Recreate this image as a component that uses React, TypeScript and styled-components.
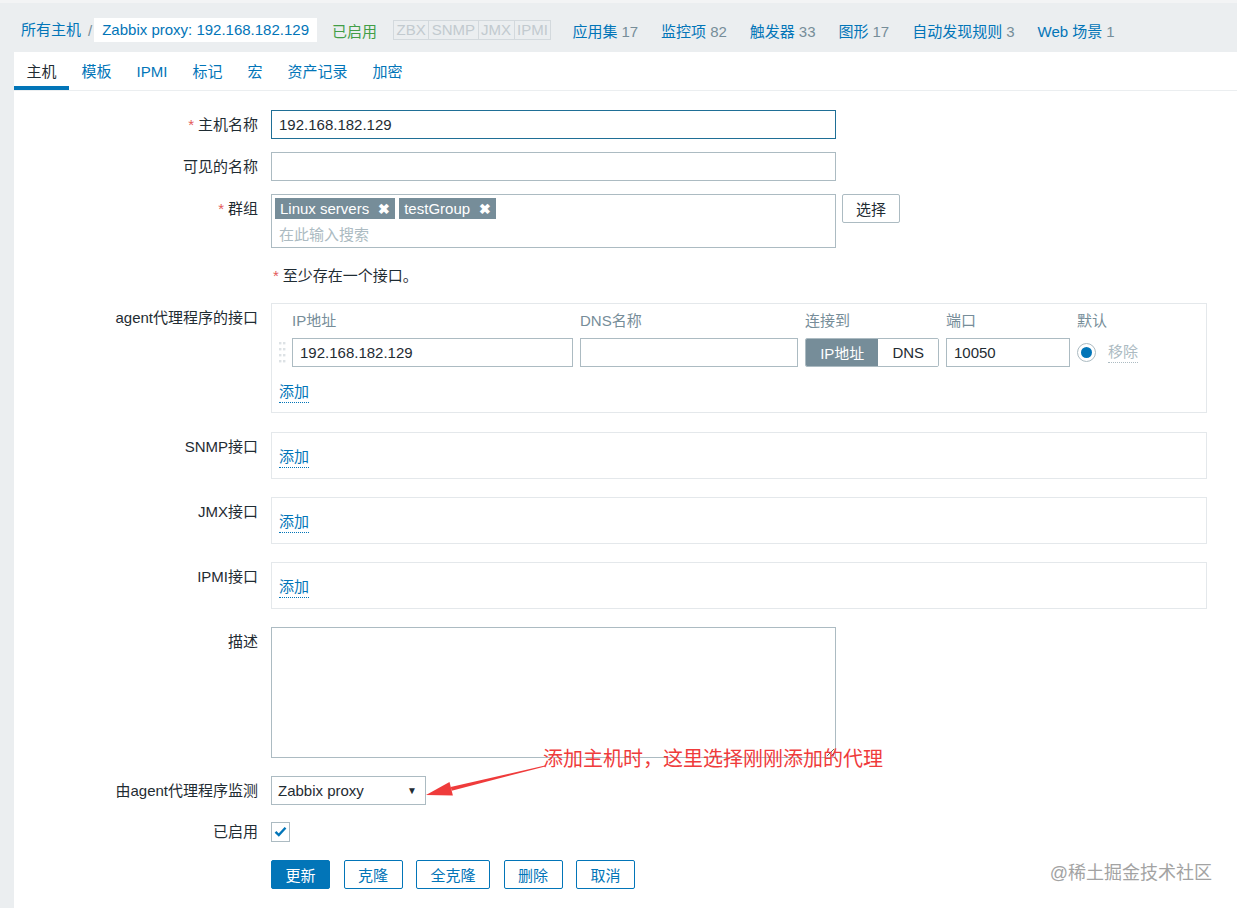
import React from "react";
import styled, { createGlobalStyle, css } from "styled-components";

const GlobalStyle = createGlobalStyle`
  html, body { margin: 0; padding: 0; }
  body {
    background: #ebeef0;
    font-family: "Liberation Sans", Arial, "Noto Sans CJK SC", sans-serif;
    font-size: 15px;
    color: #1f2c33;
  }
  * { box-sizing: border-box; }
`;

const Page = styled.div`
  position: relative;
  width: 1237px;
  height: 908px;
  overflow: hidden;
  display: flex;
  flex-direction: column;
  border-top: 3px solid #f3f4f5;
`;

const Header = styled.div`
  display: flex;
  align-items: center;
  height: 49px;
  padding: 15px 0 10px 21px;
  white-space: nowrap;
`;

const Crumb = styled.a`
  color: #0275b8;
  text-decoration: none;
  line-height: 24px;
`;

const CrumbSep = styled.span`
  color: #768d99;
  margin: 0 2px 0 7px;
`;

const CrumbCurrent = styled.span`
  background: #fff;
  color: #0275b8;
  line-height: 24px;
  padding: 0 8px;
`;

const Status = styled.span`
  color: #429e47;
  margin-left: 15px;
`;

const StatusGroup = styled.div`
  display: flex;
  margin-left: 16px;
  border: 1px solid #d3d9dd;
  height: 20px;
`;

const StatusTag = styled.span`
  color: #c2cacf;
  line-height: 18px;
  padding: 0 2.5px;
  & + & { border-left: 1px solid #d3d9dd; }
`;

const NavLinks = styled.div`
  display: flex;
  margin-left: 21px;
  gap: 23px;
`;

const NavLink = styled.a`
  color: #0275b8;
  text-decoration: none;
`;

const Count = styled.span`
  color: #768d99;
  margin-left: 4px;
`;

const Panel = styled.div`
  flex: 1;
  margin-left: 14px;
  background: #fff;
  display: flex;
  flex-direction: column;
`;

const TabBar = styled.div`
  display: flex;
  border-bottom: 1px solid #ebeef0;
`;

const Tab = styled.a<{ $active?: boolean }>`
  padding: 8px 12.5px 2px;
  line-height: 24px;
  border-bottom: 4px solid ${(p) => (p.$active ? "#0275b8" : "transparent")};
  color: ${(p) => (p.$active ? "#1f2c33" : "#0275b8")};
  text-decoration: none;
`;

const Form = styled.div`
  padding: 19px 29px 0 0;
  display: flex;
  flex-direction: column;
`;

const Row = styled.div<{ $mt?: number }>`
  display: grid;
  grid-template-columns: 244px 1fr;
  column-gap: 13px;
  margin-top: ${(p) => p.$mt ?? 0}px;
  align-items: start;
`;

const Label = styled.div<{ $lh?: number }>`
  text-align: right;
  line-height: ${(p) => p.$lh ?? 29}px;
  white-space: nowrap;
`;

const Req = styled.span`
  color: #e45959;
  margin-right: 4px;
`;

const fieldBase = css`
  height: 29px;
  border: 1px solid #acbbc2;
  background: #fff;
  font-family: inherit;
  font-size: 15px;
  color: #1f2c33;
  padding: 0 7px;
  outline: none;
`;

const TextInput = styled.input<{ $w?: number; $focus?: boolean }>`
  ${fieldBase}
  width: ${(p) => p.$w ?? 565}px;
  border-color: ${(p) => (p.$focus ? "#1f6f96" : "#acbbc2")};
`;

const MultiBox = styled.div`
  width: 565px;
  height: 54px;
  border: 1px solid #acbbc2;
  padding: 3px;
  display: flex;
  flex-direction: column;
`;

const Chips = styled.div`
  display: flex;
  gap: 4px;
`;

const Chip = styled.span`
  display: inline-flex;
  align-items: center;
  background: #768d99;
  color: #fff;
  height: 21px;
  padding: 0 5px;
  gap: 9px;
`;

const ChipX = styled.span`
  font-size: 14px;
  font-weight: bold;
`;

const Placeholder = styled.div`
  color: #acbbc2;
  line-height: 22px;
  margin-top: 5px;
  padding-left: 4px;
`;

const ControlLine = styled.div`
  display: flex;
  align-items: flex-start;
  gap: 6px;
`;

const GreyButton = styled.button`
  height: 29px;
  padding: 0 13px;
  background: #fff;
  border: 1px solid #acbbc2;
  border-radius: 2px;
  font-family: inherit;
  font-size: 15px;
  color: #1f2c33;
`;

const Note = styled.div`
  line-height: 29px;
  padding-left: 2px;
`;

const IfaceBox = styled.div<{ $empty?: boolean }>`
  width: 936px;
  border: 1px solid #e4e8eb;
  padding: ${(p) => (p.$empty ? "12px 7px 9px" : "5px 7px 8px")};
`;

const IfaceGrid = styled.div`
  display: grid;
  grid-template-columns: 6px 281px 218px 134px 124px auto;
  column-gap: 7px;
  row-gap: 5px;
  align-items: center;
`;

const ColHead = styled.div`
  color: #768d99;
  line-height: 24px;
`;

const Handle = styled.svg`
  display: block;
`;

const Segmented = styled.div`
  display: flex;
  height: 29px;
  border: 1px solid #acbbc2;
  border-radius: 2px;
  overflow: hidden;
`;

const Segment = styled.span<{ $on?: boolean }>`
  display: flex;
  align-items: center;
  justify-content: center;
  width: ${(p) => (p.$on ? 73 : 60)}px;
  background: ${(p) => (p.$on ? "#768d99" : "#fff")};
  color: ${(p) => (p.$on ? "#fff" : "#1f2c33")};
`;

const DefaultCell = styled.div`
  display: flex;
  align-items: center;
  gap: 12px;
`;

const Radio = styled.span`
  width: 19px;
  height: 19px;
  border-radius: 50%;
  border: 1px solid #acbbc2;
  display: flex;
  align-items: center;
  justify-content: center;
  &::after {
    content: "";
    width: 11px;
    height: 11px;
    border-radius: 50%;
    background: #0275b8;
  }
`;

const DottedLink = styled.a<{ $muted?: boolean }>`
  display: inline-block;
  color: ${(p) => (p.$muted ? "#acbbc2" : "#0275b8")};
  line-height: 20px;
  border-bottom: 1px dotted ${(p) => (p.$muted ? "#acbbc2" : "#0275b8")};
  text-decoration: none;
`;

const AddLine = styled.div<{ $mt?: number }>`
  line-height: 24px;
  margin-top: ${(p) => p.$mt ?? 0}px;
  height: 24px;
`;

const TextArea = styled.textarea`
  width: 565px;
  height: 131px;
  border: 1px solid #acbbc2;
  font-family: inherit;
  font-size: 15px;
  outline: none;
  display: block;
  resize: both;
`;

const Select = styled.div`
  ${fieldBase}
  width: 155px;
  display: flex;
  align-items: center;
  justify-content: space-between;
  padding: 0 8px 0 6px;
`;

const Caret = styled.span`
  font-size: 10px;
  color: #1f2c33;
`;

const CheckRow = styled.div`
  height: 29px;
  display: flex;
  align-items: center;
`;

const CheckBox = styled.span`
  width: 19px;
  height: 20px;
  border: 1px solid #acbbc2;
  display: flex;
  align-items: center;
  justify-content: center;
`;

const Buttons = styled.div`
  display: flex;
  gap: 13.5px;
`;

const Button = styled.button<{ $primary?: boolean }>`
  height: 29px;
  padding: 0 13.5px;
  border: 1px solid #0275b8;
  border-radius: 2px;
  background: ${(p) => (p.$primary ? "#0275b8" : "#fff")};
  color: ${(p) => (p.$primary ? "#fff" : "#0275b8")};
  font-family: inherit;
  font-size: 15px;
`;

const Annotation = styled.div`
  position: absolute;
  left: 543px;
  top: 743px;
  font-size: 20px;
  line-height: 24px;
  color: #ef3b3b;
  font-family: "Noto Sans CJK SC", sans-serif;
  white-space: nowrap;
`;

const ArrowSvg = styled.svg`
  position: absolute;
  left: 420px;
  top: 750px;
`;

const Watermark = styled.div`
  position: absolute;
  right: 25px;
  top: 858px;
  font-size: 18px;
  line-height: 24px;
  color: #a3a3a3;
  text-shadow: 0 0 1px #fff;
  white-space: nowrap;
`;

function DragHandle() {
  const dots = [];
  for (let r = 0; r < 4; r++) {
    for (let c = 0; c < 2; c++) {
      dots.push(<rect key={`${r}-${c}`} x={c * 4} y={2 + r * 6} width={2.4} height={2.4} fill="#dde2e5" />);
    }
  }
  return (
    <Handle width="7" height="25" viewBox="0 0 7 25">
      {dots}
    </Handle>
  );
}

export default function App() {
  return (
    <>
      <GlobalStyle />
      <Page>
        <Header>
          <Crumb>所有主机</Crumb>
          <CrumbSep>/</CrumbSep>
          <CrumbCurrent>Zabbix proxy: 192.168.182.129</CrumbCurrent>
          <Status>已启用</Status>
          <StatusGroup>
            <StatusTag>ZBX</StatusTag>
            <StatusTag>SNMP</StatusTag>
            <StatusTag>JMX</StatusTag>
            <StatusTag>IPMI</StatusTag>
          </StatusGroup>
          <NavLinks>
            <NavLink>应用集<Count>17</Count></NavLink>
            <NavLink>监控项<Count>82</Count></NavLink>
            <NavLink>触发器<Count>33</Count></NavLink>
            <NavLink>图形<Count>17</Count></NavLink>
            <NavLink>自动发现规则<Count>3</Count></NavLink>
            <NavLink>Web 场景<Count>1</Count></NavLink>
          </NavLinks>
        </Header>
        <Panel>
          <TabBar>
            <Tab $active>主机</Tab>
            <Tab>模板</Tab>
            <Tab>IPMI</Tab>
            <Tab>标记</Tab>
            <Tab>宏</Tab>
            <Tab>资产记录</Tab>
            <Tab>加密</Tab>
          </TabBar>
          <Form>
            <Row>
              <Label><Req>*</Req>主机名称</Label>
              <TextInput $focus defaultValue="192.168.182.129" />
            </Row>
            <Row $mt={13}>
              <Label>可见的名称</Label>
              <TextInput defaultValue="" />
            </Row>
            <Row $mt={13}>
              <Label><Req>*</Req>群组</Label>
              <ControlLine>
                <MultiBox>
                  <Chips>
                    <Chip>Linux servers<ChipX>✖</ChipX></Chip>
                    <Chip>testGroup<ChipX>✖</ChipX></Chip>
                  </Chips>
                  <Placeholder>在此输入搜索</Placeholder>
                </MultiBox>
                <GreyButton>选择</GreyButton>
              </ControlLine>
            </Row>
            <Row $mt={13}>
              <Label />
              <Note><Req>*</Req>至少存在一个接口。</Note>
            </Row>
            <Row $mt={13}>
              <Label>agent代理程序的接口</Label>
              <IfaceBox>
                <IfaceGrid>
                  <span />
                  <ColHead>IP地址</ColHead>
                  <ColHead>DNS名称</ColHead>
                  <ColHead>连接到</ColHead>
                  <ColHead>端口</ColHead>
                  <ColHead>默认</ColHead>
                  <DragHandle />
                  <TextInput $w={281} defaultValue="192.168.182.129" />
                  <TextInput $w={218} defaultValue="" />
                  <Segmented>
                    <Segment $on>IP地址</Segment>
                    <Segment>DNS</Segment>
                  </Segmented>
                  <TextInput $w={124} defaultValue="10050" />
                  <DefaultCell>
                    <Radio />
                    <DottedLink $muted>移除</DottedLink>
                  </DefaultCell>
                </IfaceGrid>
                <AddLine $mt={13}><DottedLink>添加</DottedLink></AddLine>
              </IfaceBox>
            </Row>
            <Row $mt={19}>
              <Label>SNMP接口</Label>
              <IfaceBox $empty>
                <AddLine><DottedLink>添加</DottedLink></AddLine>
              </IfaceBox>
            </Row>
            <Row $mt={18}>
              <Label>JMX接口</Label>
              <IfaceBox $empty>
                <AddLine><DottedLink>添加</DottedLink></AddLine>
              </IfaceBox>
            </Row>
            <Row $mt={18}>
              <Label>IPMI接口</Label>
              <IfaceBox $empty>
                <AddLine><DottedLink>添加</DottedLink></AddLine>
              </IfaceBox>
            </Row>
            <Row $mt={18}>
              <Label>描述</Label>
              <TextArea defaultValue="" />
            </Row>
            <Row $mt={18}>
              <Label>由agent代理程序监测</Label>
              <Select>
                <span>Zabbix proxy</span>
                <Caret>▼</Caret>
              </Select>
            </Row>
            <Row $mt={12}>
              <Label>已启用</Label>
              <CheckRow>
                <CheckBox>
                  <svg width="13" height="11" viewBox="0 0 13 11">
                    <path d="M1.5 5.8 L4.8 9 L11.5 1.8" fill="none" stroke="#0275b8" strokeWidth="2.4" />
                  </svg>
                </CheckBox>
              </CheckRow>
            </Row>
            <Row $mt={14}>
              <Label />
              <Buttons>
                <Button $primary>更新</Button>
                <Button>克隆</Button>
                <Button>全克隆</Button>
                <Button>删除</Button>
                <Button>取消</Button>
              </Buttons>
            </Row>
          </Form>
        </Panel>
        <Annotation>添加主机时，这里选择刚刚添加的代理</Annotation>
        <ArrowSvg width="130" height="50" viewBox="0 0 130 50">
          <polygon points="125.1,13.5 124.9,12.5 30.7,33.9 31.7,37.7" fill="#ef3b3b" />
          <polygon points="6,42 32.9,42.6 29.5,29.0" fill="#ef3b3b" />
        </ArrowSvg>
        <Watermark>@稀土掘金技术社区</Watermark>
      </Page>
    </>
  );
}
